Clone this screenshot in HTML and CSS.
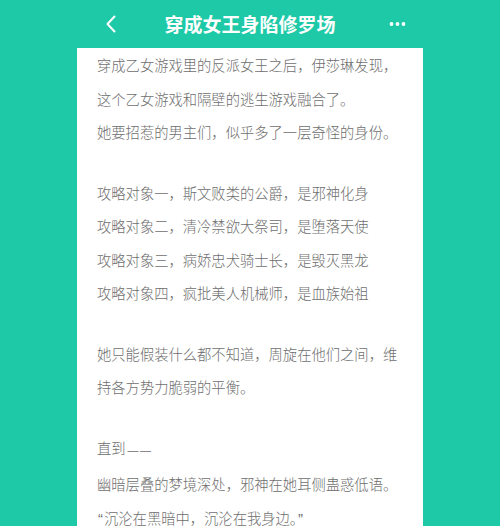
FILE: index.html
```html
<!DOCTYPE html>
<html lang="zh-CN">
<head>
<meta charset="utf-8">
<title>穿成女王身陷修罗场</title>
<link rel="stylesheet" href="styles.css">
</head>
<body>
<header class="topbar">
  <svg class="back" width="32" height="24" viewBox="0 0 32 24" aria-hidden="true">
    <polyline points="26.5,4.5 19.5,12 26.5,19.5" fill="none" stroke="#fff" stroke-width="2" stroke-linecap="round" stroke-linejoin="round"/>
  </svg>
  <h1 class="title">穿成女王身陷修罗场</h1>
  <svg class="more" width="24" height="24" viewBox="0 0 24 24" aria-hidden="true">
    <circle cx="3.5" cy="12" r="1.9" fill="#fff"/>
    <circle cx="9.5" cy="12" r="1.9" fill="#fff"/>
    <circle cx="15.5" cy="12" r="1.9" fill="#fff"/>
  </svg>
</header>
<main class="card">
  <div class="group">
    <p>穿成乙女游戏里的反派女王之后，伊莎琳发现，这个乙女游戏和隔壁的逃生游戏融合了。</p>
    <p>她要招惹的男主们，似乎多了一层奇怪的身份。</p>
  </div>
  <div class="group">
    <p>攻略对象一，斯文败类的公爵，是邪神化身</p>
    <p>攻略对象二，清冷禁欲大祭司，是堕落天使</p>
    <p>攻略对象三，病娇忠犬骑士长，是毁灭黑龙</p>
    <p>攻略对象四，疯批美人机械师，是血族始祖</p>
  </div>
  <div class="group">
    <p>她只能假装什么都不知道，周旋在他们之间，维持各方势力脆弱的平衡。</p>
  </div>
  <div class="group">
    <p>直到<span class="dash">——</span></p>
    <p>幽暗层叠的梦境深处，邪神在她耳侧蛊惑低语。</p>
    <p><span class="quote">“</span>沉沦在黑暗中，沉沦在我身边。<span class="quote">”</span></p>
  </div>
</main>
</body>
</html>
```
FILE: styles.css
```css
html, body {
  margin: 0;
  padding: 0;
}
body {
  background: #1dc9a6;
  font-family: "Noto Sans CJK SC", "Noto Sans", sans-serif;
  width: 500px;
  height: 526px;
  overflow: hidden;
}
.topbar {
  height: 48px;
  display: grid;
  grid-template-columns: 1fr auto 1fr;
  align-items: center;
  padding: 0 88px;
}
.back {
  justify-self: start;
  display: block;
}
.more {
  justify-self: end;
  display: block;
}
.title {
  margin: 0;
  color: #fff;
  font-size: 19px;
  font-weight: 700;
  line-height: 48px;
}
.card {
  width: 306px;
  margin: 0 auto;
  padding: 0 20px;
  background: #fff;
  min-height: 500px;
  color: #6e6e6e;
  font-size: 14.3px;
  font-weight: 300;
}
.group + .group {
  margin-top: 27px;
}
.group p {
  margin: 0;
  line-height: 33.5px;
}
.dash {
  font-family: "Liberation Sans", sans-serif;
  font-size: 11px;
  letter-spacing: 1.5px;
  margin-left: 2px;
}
.quote {
  font-family: "Liberation Sans", sans-serif;
  font-size: 15px;
  margin: 0 1px;
}
```
